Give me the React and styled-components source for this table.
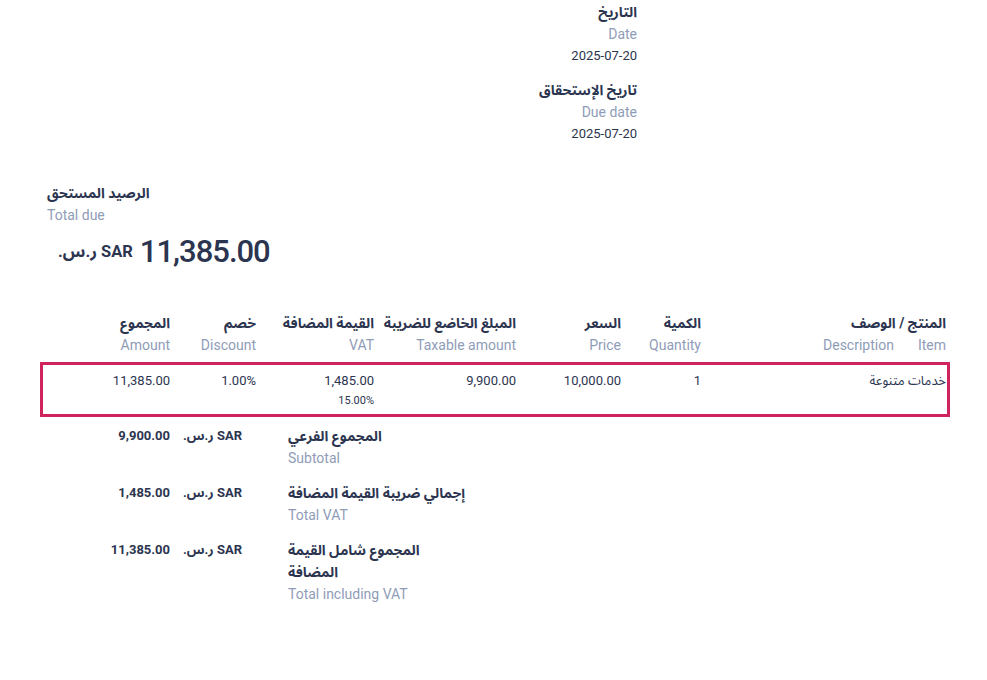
import styled, { createGlobalStyle } from "styled-components";

const GlobalStyle = createGlobalStyle`
  body {
    margin: 0;
    background: #ffffff;
    font-family: Roboto, "Noto Sans Arabic", "DejaVu Sans", sans-serif;
    color: #2c3550;
  }
`

const Page = styled.div`
  direction: rtl;
  width: 987px;
  box-sizing: border-box;
  padding: 1px 37px 40px 37px;
  display: flex;
  flex-direction: column;
`

const Header = styled.div`
  display: grid;
  grid-template-columns: 313px auto;
  justify-content: start;
`

const MetaList = styled.div`
  display: flex;
  flex-direction: column;
  gap: 12px;
`

const Field = styled.div`
  display: flex;
  flex-direction: column;
`

const ArLabel = styled.div`
  font-size: 14px;
  font-weight: 700;
  line-height: 22px;
  color: #2c3550;
`

const EnLabel = styled.div`
  font-size: 14px;
  line-height: 22px;
  color: #8f9cb7;
`

const Value = styled.div`
  font-size: 13px;
  line-height: 22px;
  color: #2c3550;
`

const TotalDue = styled.div`
  margin-top: 37px;
  margin-left: 10px;
  display: flex;
  flex-direction: column;
  align-items: flex-end;
`

const LeftText = styled.div`
  text-align: left;
`

const AmountRow = styled.div`
  margin-top: 7px;
  margin-left: 11px;
  display: flex;
  align-items: center;
  gap: 7px;
`

const BigAmount = styled.span`
  font-size: 31px;
  font-weight: 500;
  line-height: 38px;
  letter-spacing: -1px;
  color: #2c3550;
`

const Currency = styled.span`
  font-size: ${({big}) => big ? '16.5px' : '13px'};
  font-weight: 700;
  line-height: 22px;
  color: #2c3550;
  direction: rtl;
  text-align: left;
  white-space: nowrap;
`

const Table = styled.div`
  margin-top: 41px;
  margin-left: 3px;
  display: flex;
  flex-direction: column;
  gap: 6px;
`

const Cols = styled.div`
  display: grid;
  grid-template-columns: 245px 80px 105px 142px 118px 86px 134px;
`

const HeadRow = styled(Cols)``

const BodyRow = styled(Cols)`
  padding: 8px 0;
  box-shadow: inset 0 0 0 3px #d0245d;
`

const Cell = styled.div`
  padding: 0 4px;
  text-align: right;
  display: flex;
  flex-direction: column;
  align-items: flex-start;
`

const SubLabels = styled.div`
  display: flex;
  gap: 24px;
`

const CellValue = styled.div`
  font-size: 13px;
  line-height: 22px;
  color: #2c3550;
`

const CellNote = styled.div`
  font-size: 11px;
  line-height: 16px;
  color: #2c3550;
  margin-top: 1px;
`

const Totals = styled.div`
  direction: ltr;
  margin-top: 8px;
  margin-left: 63px;
  display: grid;
  grid-template-columns: 70px 92px 178px;
  column-gap: 13px;
  row-gap: 13px;
`

const TotalValue = styled.div`
  font-size: 13px;
  font-weight: 700;
  line-height: 22px;
  text-align: right;
  color: #2c3550;
`

const TotalLabel = styled.div`
  direction: rtl;
  text-align: left;
  display: flex;
  flex-direction: column;
  align-items: flex-end;
`

const TotalEn = styled(EnLabel)`
  direction: ltr;
`

const columns = [
  { ar: "الكمية", en: "Quantity" },
  { ar: "السعر", en: "Price" },
  { ar: "المبلغ الخاضع للضريبة", en: "Taxable amount" },
  { ar: "القيمة المضافة", en: "VAT" },
  { ar: "خصم", en: "Discount" },
  { ar: "المجموع", en: "Amount" },
]

const totals = [
  { value: "9,900.00", ar: "المجموع الفرعي", en: "Subtotal" },
  { value: "1,485.00", ar: "إجمالي ضريبة القيمة المضافة", en: "Total VAT" },
  { value: "11,385.00", ar: "المجموع شامل القيمة المضافة", en: "Total including VAT" },
]

function App() {
  return (
    <>
      <GlobalStyle />
      <Page>
        <Header>
          <div />
          <MetaList>
            <Field>
              <ArLabel>التاريخ</ArLabel>
              <EnLabel>Date</EnLabel>
              <Value>2025-07-20</Value>
            </Field>
            <Field>
              <ArLabel>تاريخ الإستحقاق</ArLabel>
              <EnLabel>Due date</EnLabel>
              <Value>2025-07-20</Value>
            </Field>
          </MetaList>
        </Header>

        <TotalDue>
          <LeftText>
            <ArLabel>الرصيد المستحق</ArLabel>
            <EnLabel>Total due</EnLabel>
          </LeftText>
          <AmountRow>
            <BigAmount>11,385.00</BigAmount>
            <Currency big>SAR ر.س.</Currency>
          </AmountRow>
        </TotalDue>

        <Table>
          <HeadRow>
            <Cell>
              <ArLabel>المنتج / الوصف</ArLabel>
              <SubLabels>
                <EnLabel>Item</EnLabel>
                <EnLabel>Description</EnLabel>
              </SubLabels>
            </Cell>
            {columns.map((c) => (
              <Cell key={c.en}>
                <ArLabel>{c.ar}</ArLabel>
                <EnLabel>{c.en}</EnLabel>
              </Cell>
            ))}
          </HeadRow>
          <BodyRow>
            <Cell><CellValue>خدمات متنوعة</CellValue></Cell>
            <Cell><CellValue>1</CellValue></Cell>
            <Cell><CellValue>10,000.00</CellValue></Cell>
            <Cell><CellValue>9,900.00</CellValue></Cell>
            <Cell>
              <CellValue>1,485.00</CellValue>
              <CellNote>15.00%</CellNote>
            </Cell>
            <Cell><CellValue>1.00%</CellValue></Cell>
            <Cell><CellValue>11,385.00</CellValue></Cell>
          </BodyRow>
        </Table>

        <Totals>
          {totals.map((t) => [
            <TotalValue key={t.en + "v"}>{t.value}</TotalValue>,
            <Currency key={t.en + "c"}>SAR ر.س.</Currency>,
            <TotalLabel key={t.en}>
              <ArLabel>{t.ar}</ArLabel>
              <TotalEn>{t.en}</TotalEn>
            </TotalLabel>,
          ])}
        </Totals>
      </Page>
    </>
  )
}

export default App;
